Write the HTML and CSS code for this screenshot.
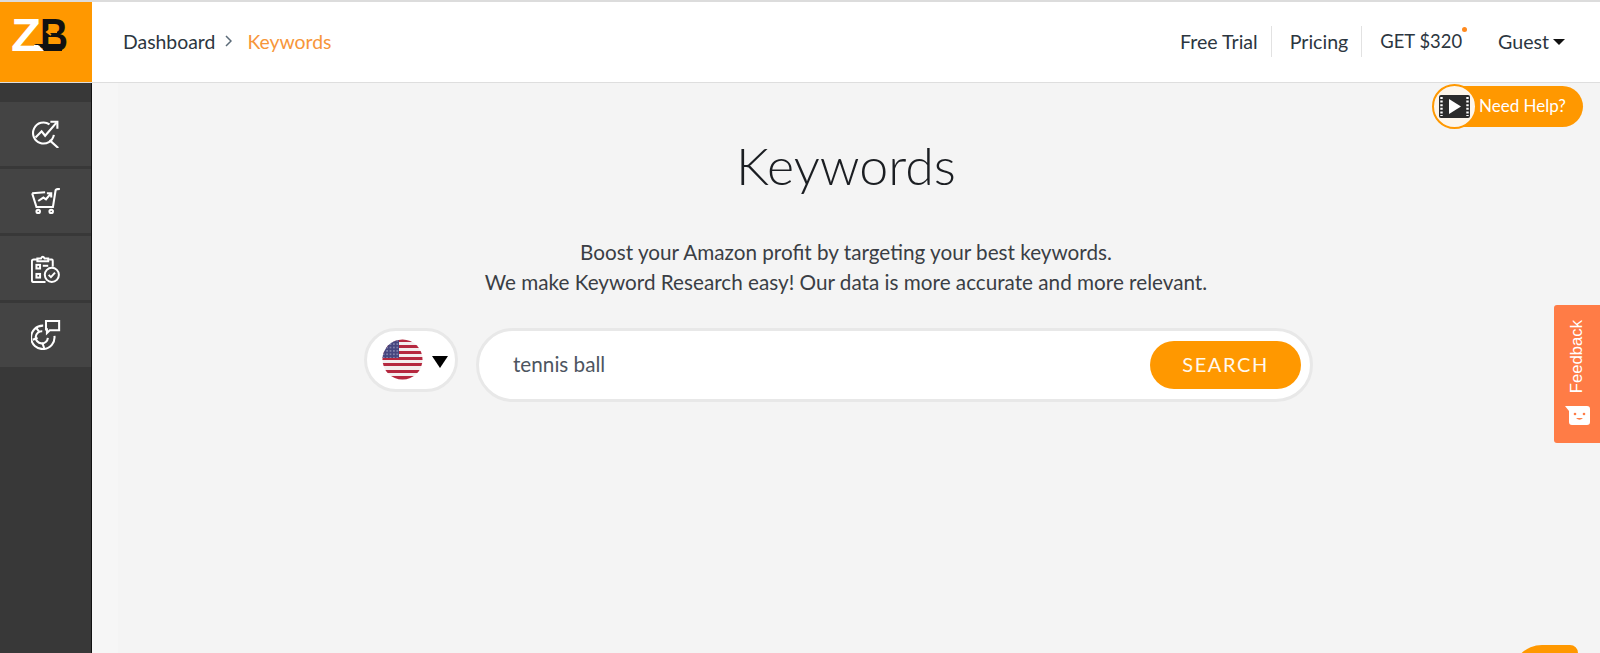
FILE: index.html
```html
<!DOCTYPE html>
<html lang="en">
  <head>
    <meta charset="UTF-8" />
    <meta name="viewport" content="width=device-width, initial-scale=1.0" />
    <title>Keywords</title>
    <link rel="stylesheet" href="styles.css">
  </head>
  <body>
    <header>
      <div class="logo">
        <svg width="92" height="80" viewBox="0 0 92 80">
          <text x="40" y="49" class="logo-b" textLength="28" lengthAdjust="spacingAndGlyphs">B</text>
          <path d="M34 42 H62 V49 H48 Z" fill="#111" />
          <text x="11" y="49" class="logo-z" textLength="30" lengthAdjust="spacingAndGlyphs">Z</text>
          <path d="M34 49 H44 L38 43 H34 Z" fill="#fff" />
          <path d="M57 30 H48 M51 27 L47 30 L51 33" fill="none" stroke="#ff9800" stroke-width="1.8" />
        </svg>
      </div>
      <div class="breadcrumb">
        <span>Dashboard</span>
        <svg width="7" height="12" viewBox="0 0 7 12"><path d="M1 1 L6 6 L1 11" fill="none" stroke="#5b6b78" stroke-width="1.5" /></svg>
        <span class="current">Keywords</span>
      </div>
      <nav>
        <a class="sep">Free Trial</a>
        <a class="sep">Pricing</a>
        <a class="get">GET $320<i class="dot"></i></a>
        <a class="guest">Guest<i class="caret"></i></a>
      </nav>
    </header>

    <div class="wrap">
      <aside>
        <div class="side-item">
          <svg width="28" height="28" viewBox="0 0 32 32" fill="none" stroke="#fff" stroke-width="2.4">
            <path d="M20 5 A12 12 0 1 0 25 17" />
            <path d="M4 20 L11 13 L15 18 L28 3" />
            <path d="M21 2 H29 V10" />
            <path d="M20 23 L30 32" />
          </svg>
        </div>
        <div class="side-item">
          <svg width="30" height="26" viewBox="0 0 34 30" fill="none" stroke="#fff" stroke-width="2.4">
            <path d="M1 6 L16 5 M1 6 L6 22 H25 L28 3 Q28 1 33 1" />
            <path d="M8 15 L14 11 L17 13 L22 7 M18 6 H23 V11" />
            <circle cx="8" cy="27" r="2" />
            <circle cx="23" cy="27" r="2" />
          </svg>
        </div>
        <div class="side-item">
          <svg width="29" height="29" viewBox="0 0 32 32" fill="none" stroke="#fff" stroke-width="2.2">
            <path d="M8 6 H3 Q1 6 1 8 V29 Q1 31 3 31 H16" />
            <path d="M20 6 H23 Q24 6 24 8 V14" />
            <path d="M7 8 V5 H11 Q13 1 15 5 H19 V8 Z" />
            <rect x="6" y="12" width="4" height="4" />
            <rect x="6" y="22" width="4" height="4" />
            <path d="M13 13 H19" />
            <circle cx="23" cy="23" r="7.8" />
            <path d="M19.5 23 L22 25.5 L26.5 20.5" />
          </svg>
        </div>
        <div class="side-item">
          <svg width="30" height="30" viewBox="0 0 32 32" fill="none" stroke="#fff" stroke-width="2.2">
            <path d="M13 6 A12.5 12.5 0 1 0 25 17" />
            <path d="M12 12 A6.5 6.5 0 1 0 18 19" />
            <path d="M2 21 L7 19 M12 24 L14 30 M6 9 L9 13" />
            <path d="M16 1 H30 V11 H20 L17 14 V10 H16 Z" />
          </svg>
        </div>
      </aside>

      <main>
        <h1>Keywords</h1>
        <p class="intro">Boost your Amazon profit by targeting your best keywords.<br />We make Keyword Research easy! Our data is more accurate and more relevant.</p>
        <div class="search-row">
          <div class="country">
            <svg class="flag" width="41" height="41" viewBox="0 0 41 41">
              <defs>
                <clipPath id="round"><circle cx="20.5" cy="20.5" r="20" /></clipPath>
                <pattern id="stars" width="3.4" height="3.4" patternUnits="userSpaceOnUse">
                  <circle cx="1.7" cy="1.7" r="0.7" fill="#c9c9e0" />
                </pattern>
              </defs>
              <g clip-path="url(#round)">
                <rect width="41" height="41" fill="#f3eeee" />
                <rect y="0" width="41" height="3" fill="#b5283f" />
                <rect y="6" width="41" height="3" fill="#b5283f" />
                <rect y="12" width="41" height="3" fill="#b5283f" />
                <rect y="18" width="41" height="3" fill="#b5283f" />
                <rect y="24" width="41" height="3" fill="#b5283f" />
                <rect y="31" width="41" height="3" fill="#b5283f" />
                <rect y="37" width="41" height="4" fill="#b5283f" />
                <rect width="17" height="19" fill="#46467f" />
                <rect width="17" height="19" fill="url(#stars)" />
              </g>
            </svg>
            <i class="arrow"></i>
          </div>
          <div class="search-box">
            <span class="query">tennis ball</span>
            <button>SEARCH</button>
          </div>
        </div>
      </main>
    </div>

    <a class="help">
      <span class="help-circle">
        <svg width="31" height="23" viewBox="0 0 31 23">
          <rect width="31" height="23" rx="2" fill="#2b2b2b" />
          <path d="M2.5 2 V21 M28.5 2 V21" stroke="#fff" stroke-width="2.4" stroke-dasharray="2 1.6" />
          <path d="M10 4 L22 11.5 L10 19 Z" fill="#fff" />
        </svg>
      </span>
      <span class="help-text">Need Help?</span>
    </a>

    <div class="feedback">
      <span>Feedback</span>
      <svg width="25" height="20" viewBox="0 0 25 20">
        <path d="M0 0 H22 Q25 0 25 3 V16 Q25 19 22 19 H7 Q4 19 4 16 V5 Z" fill="#fff" />
        <circle cx="10" cy="8" r="1.3" fill="#ff7c46" />
        <circle cx="19" cy="8" r="1.3" fill="#ff7c46" />
        <path d="M11 12 Q14.5 15.5 18 12 Z" fill="#ff7c46" />
      </svg>
    </div>

    <div class="chat-tab"></div>
  </body>
</html>
```

FILE: styles.css
```css
* {
  box-sizing: border-box;
}

html,
body {
  height: 100%;
}

body {
  margin: 0;
  overflow: hidden;
  font-family: "Lato", "Open Sans", sans-serif;
  color: #2c3640;
  background-color: #f4f4f4;
  border-top: 2px solid #dcdcdc;
}

header {
  display: flex;
  align-items: center;
  height: 81px;
  padding-bottom: 2px;
  background-color: white;
  border-bottom: 1px solid #dedede;
}

.logo {
  width: 92px;
  height: 80px;
  flex-shrink: 0;
  align-self: flex-start;
  background-color: #ff9800;
}

.logo svg {
  display: block;
}

.logo-z,
.logo-b {
  font-family: "Liberation Sans", sans-serif;
  font-weight: 700;
  font-size: 46px;
}

.logo-z {
  fill: white;
}

.logo-b {
  fill: #111;
}

.breadcrumb {
  display: flex;
  align-items: center;
  gap: 10px;
  margin-left: 31px;
  font-size: 19.4px;
}

.breadcrumb .current {
  margin-left: 5px;
  color: #f7963a;
}

nav {
  display: flex;
  align-items: center;
  margin-left: auto;
  padding-right: 35px;
  font-size: 19.6px;
}

nav a {
  position: relative;
  line-height: 31px;
}

nav .sep {
  padding-right: 13px;
  margin-right: 18px;
  border-right: 1px solid #e2e2e2;
}

nav .get {
  font-size: 18.4px;
}

.dot {
  position: absolute;
  top: 1px;
  right: -5px;
  width: 5px;
  height: 5px;
  border-radius: 50%;
  background-color: #ff8a1e;
}

.guest {
  margin-left: 36px;
}

.caret {
  display: inline-block;
  margin-left: 4px;
  vertical-align: 4px;
  border-top: 6px solid #111;
  border-left: 6px solid transparent;
  border-right: 6px solid transparent;
}

.wrap {
  display: flex;
  height: 570px;
}

aside {
  display: flex;
  flex-direction: column;
  gap: 3px;
  width: 92px;
  flex-shrink: 0;
  padding-top: 19px;
  background-color: #383838;
  border-right: 1px solid #111;
}

.side-item {
  display: flex;
  align-items: center;
  justify-content: center;
  height: 64px;
  background-color: #444;
}

main {
  flex: 1;
  text-align: center;
  background: linear-gradient(90deg, #f6f6f6 26px, #f4f4f4 26px);
}

h1 {
  margin: 50px 0 0;
  font-size: 52px;
  font-weight: 300;
  line-height: 64px;
  color: #1b1e22;
}

.intro {
  margin: 40px 0 0;
  font-size: 20.7px;
  line-height: 30px;
  color: #3a3e44;
}

.search-row {
  display: flex;
  justify-content: center;
  align-items: flex-start;
  gap: 18px;
  margin-top: 31px;
  padding-right: 15px;
}

.country {
  display: flex;
  align-items: center;
  gap: 9px;
  width: 94px;
  height: 64px;
  padding-left: 15px;
  background-color: white;
  border: 3px solid #e8e8e8;
  border-radius: 32px;
}

.flag {
  margin-top: -2px;
}

.arrow {
  margin-top: 4px;
  border-top: 12px solid #000;
  border-left: 8px solid transparent;
  border-right: 8px solid transparent;
}

.search-box {
  display: flex;
  align-items: center;
  justify-content: space-between;
  width: 837px;
  height: 74px;
  padding: 0 9px 0 34px;
  background-color: white;
  border: 3px solid #e8e8e8;
  border-radius: 37px;
}

.query {
  margin-top: -2px;
  font-size: 20.7px;
  color: #4d5560;
}

button {
  width: 151px;
  height: 48px;
  padding-bottom: 4px;
  border: none;
  border-radius: 24px;
  font-family: inherit;
  font-size: 20px;
  letter-spacing: 1.6px;
  color: #fff8ee;
  background-color: #ff9800;
  cursor: pointer;
}

.help {
  position: absolute;
  top: 86px;
  left: 1434px;
  display: flex;
  align-items: center;
  width: 149px;
  height: 41px;
  border-radius: 21px;
  font-size: 17px;
  color: white;
  background-color: #ff9800;
}

.help-text {
  margin-top: -2px;
}

.help-circle {
  display: flex;
  align-items: center;
  justify-content: center;
  width: 45px;
  height: 45px;
  margin-left: -2px;
  margin-right: 2px;
  flex-shrink: 0;
  border: 2px solid #ff9800;
  border-radius: 50%;
  background-color: #fdf6ec;
}

.feedback {
  position: absolute;
  top: 305px;
  right: 0;
  display: flex;
  flex-direction: column;
  align-items: center;
  gap: 13px;
  width: 46px;
  height: 138px;
  padding-top: 15px;
  border-radius: 3px 0 0 3px;
  font-family: "Liberation Sans", sans-serif;
  font-size: 16.7px;
  color: white;
  background-color: #ff7c46;
}

.feedback span {
  writing-mode: vertical-rl;
  transform: rotate(180deg);
}

.chat-tab {
  position: absolute;
  left: 1512px;
  top: 645px;
  width: 66px;
  height: 40px;
  border-radius: 30px 8px 0 0;
  background-color: #ff9800;
}
```
